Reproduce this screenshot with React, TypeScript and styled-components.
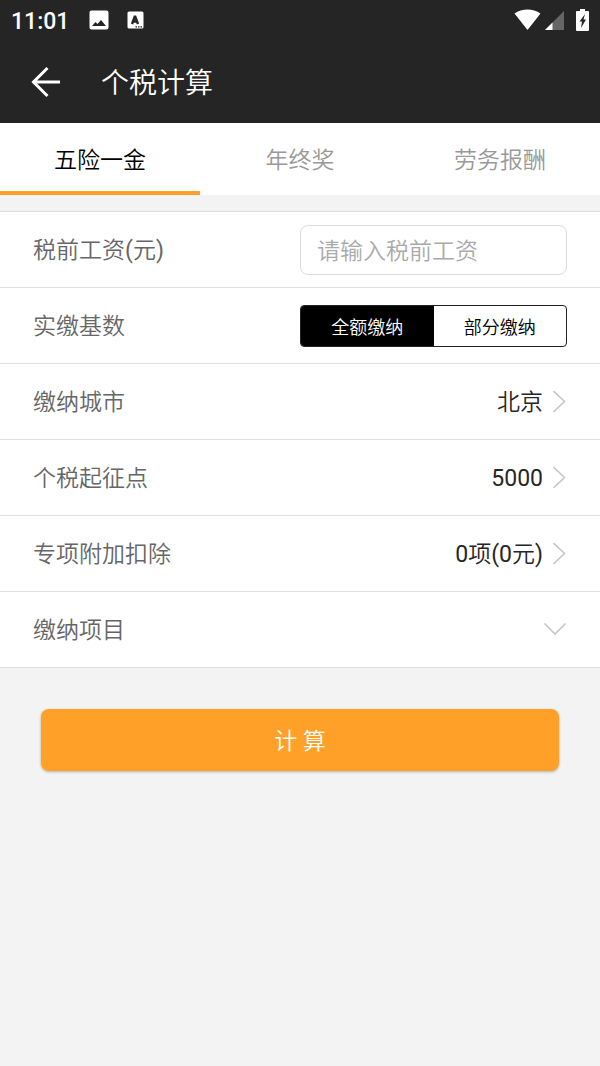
import React, { useState } from "react";
import styled, { createGlobalStyle } from "styled-components";

const GlobalStyle = createGlobalStyle`
  *, *::before, *::after { box-sizing: border-box; }
  body {
    margin: 0;
    background: #f3f3f3;
    font-family: Roboto, "Noto Sans CJK SC", sans-serif;
    font-size: 23px;
    font-weight: 350;
    line-height: 32px;
    color: #262626;
  }
  button, input { font: inherit; color: inherit; }
`;

const Screen = styled.div`
  display: flex;
  flex-direction: column;
  min-height: 100vh;
`;

const Header = styled.header`
  background: #252525;
  color: #fff;
`;

const StatusBar = styled.div`
  display: flex;
  align-items: center;
  height: 40px;
  padding: 0 5px 0 11px;
`;

const Clock = styled.span`
  padding-top: 4px;
  font-size: 23px;
  font-weight: 500;
  line-height: 36px;
  margin-right: 20px;
`;

const StatusIcons = styled.div<{ $gap: number; $end?: boolean }>`
  display: flex;
  align-items: center;
  gap: ${(p) => p.$gap}px;
  margin-left: ${(p) => (p.$end ? "auto" : "0")};
`;

const AppBar = styled.div`
  display: flex;
  align-items: center;
  gap: 37px;
  height: 83px;
  padding: 0 28px;
`;

const BackButton = styled.button`
  display: flex;
  padding: 0;
  border: 0;
  background: none;
  cursor: pointer;
`;

const Title = styled.h1`
  margin: 0;
  padding-top: 4px;
  font-size: 28px;
  font-weight: inherit;
  line-height: 40px;
`;

const Tabs = styled.nav`
  display: flex;
  background: #fff;
`;

const Tab = styled.button<{ $active: boolean }>`
  flex: 1;
  height: 72px;
  padding: 8px 0 0;
  border: 0;
  border-bottom: 4px solid ${(p) => (p.$active ? "#ffa028" : "transparent")};
  background: none;
  color: ${(p) => (p.$active ? "#000" : "#999")};
  cursor: pointer;
`;

const Form = styled.form`
  display: flex;
  flex-direction: column;
`;

const List = styled.div`
  margin-top: 16px;
  border-top: 1px solid #dcdcdc;
  background: #fff;
`;

const Row = styled.div`
  display: flex;
  align-items: center;
  justify-content: space-between;
  height: 76px;
  padding: 0 33px;
  border-bottom: 1px solid #e0e0e0;
`;

const LinkRow = styled(Row).attrs({ as: "button", type: "button" })`
  width: 100%;
  border-width: 0 0 1px;
  background: none;
  text-align: left;
  cursor: pointer;
`;

const Label = styled.span`
  padding-top: 3px;
  color: #666;
`;

const Value = styled.span`
  display: flex;
  align-items: center;
  gap: 10px;
`;

const ValueText = styled.span`
  padding-top: 3px;
`;

const Latin = styled.span`
  font-weight: 400;
`;

const SalaryInput = styled.input`
  width: 50%;
  height: 50px;
  padding: 3px 16px 0;
  border: 1px solid #dcdcdc;
  border-radius: 8px;
  outline: 0;
  background: #fff;
  &::placeholder { color: #aaa; opacity: 1; }
`;

const Segments = styled.div`
  display: flex;
  width: 50%;
  height: 42px;
  border: 1px solid #222;
  border-radius: 4px;
  overflow: hidden;
`;

const Segment = styled.label`
  position: relative;
  display: flex;
  flex: 1;
  align-items: center;
  justify-content: center;
  padding-top: 4px;
  font-size: 18px;
  color: #000;
  cursor: pointer;
  &:has(input:checked) { background: #000; color: #fff; }
`;

const HiddenRadio = styled.input`
  position: absolute;
  opacity: 0;
  margin: 0;
`;

const SubmitButton = styled.button`
  height: 62px;
  margin: 41px 41px;
  padding: 3px 0 0;
  border: 0;
  border-radius: 8px;
  background: #ffa028;
  box-shadow: 0 1px 3px rgba(0, 0, 0, 0.28);
  color: #fff;
  cursor: pointer;
`;

const ChevronRight = () => (
  <svg width="14" height="24" viewBox="0 0 14 24" fill="none" stroke="#c8c8c8" strokeWidth="1.6" aria-hidden="true">
    <path d="M0.5 1 11.5 11.5 0.5 22" />
  </svg>
);

const ChevronDown = () => (
  <svg width="24" height="14" viewBox="0 0 24 14" fill="none" stroke="#c8c8c8" strokeWidth="1.6" aria-hidden="true">
    <path d="M1.5 0.5 12 11 22.5 0.5" />
  </svg>
);

// Digits and brackets are set one weight up so they balance the Chinese text.
const Mixed = ({ text }: { text: string }) => (
  <>
    {text.split(/([0-9()]+)/).map((part, i) => (i % 2 ? <Latin key={i}>{part}</Latin> : part))}
  </>
);

const tabs = ["五险一金", "年终奖", "劳务报酬"];
const bases = ["全额缴纳", "部分缴纳"];
const options = [
  { label: "缴纳城市", value: "北京" },
  { label: "个税起征点", value: "5000" },
  { label: "专项附加扣除", value: "0项(0元)" },
];

export default function App() {
  const [tab, setTab] = useState(0);
  const [base, setBase] = useState(0);

  return (
    <Screen>
      <GlobalStyle />
      <Header>
        <StatusBar>
          <Clock>11:01</Clock>
          <StatusIcons $gap={18}>
            <svg width="20" height="20" viewBox="0 0 20 20" aria-hidden="true">
              <rect x="0.5" y="0.5" width="19" height="19" rx="2" fill="#fff" />
              <path d="M3 16 6.5 12 8.5 14 12 10 17 16Z" fill="#252525" />
            </svg>
            <svg width="17" height="18" viewBox="0 0 17 18" aria-hidden="true">
              <rect x="0.5" y="0.5" width="16" height="17" rx="1.5" fill="#fff" />
              <path d="M5 13 8 5 11 13M6 10.5H10" fill="none" stroke="#252525" strokeWidth="2.4" strokeLinejoin="bevel" />
              <path d="M8.5 15.8h1.5M11 15.8h1.5M13.5 15.8H15" stroke="#252525" strokeWidth="1.2" />
            </svg>
          </StatusIcons>
          <StatusIcons $gap={4} $end>
            <svg width="27" height="22" viewBox="0 0 27 22" aria-hidden="true">
              <path d="M0.5 4.5C8-1 19-1 26.5 4.5L13.5 21Z" fill="#fff" />
            </svg>
            <svg width="22" height="20" viewBox="0 0 22 20" aria-hidden="true">
              <path d="M0 20 19 1V20Z" fill="#666" />
              <path d="M0 20 7.5 12.5V20Z" fill="#fff" />
            </svg>
            <svg width="24" height="24" viewBox="0 0 24 24" aria-hidden="true">
              <path d="M9 1h5v2h3q1 0 1 1v18q0 1-1 1H6q-1 0-1-1V4q0-1 1-1h3Z" fill="#fff" />
              <path d="M14 6 8.5 13.5h2.5L10 20 15 11.5h-2.5Z" fill="#252525" />
            </svg>
          </StatusIcons>
        </StatusBar>
        <AppBar>
          <BackButton type="button" aria-label="返回">
            <svg width="36" height="36" viewBox="0 0 36 36" fill="none" stroke="#fff" strokeWidth="3" aria-hidden="true">
              <path d="M32 18H6M19.5 4 5.5 18 19.5 32" />
            </svg>
          </BackButton>
          <Title>个税计算</Title>
        </AppBar>
      </Header>
      <Tabs>
        {tabs.map((name, i) => (
          <Tab key={name} type="button" $active={i === tab} onClick={() => setTab(i)}>
            {name}
          </Tab>
        ))}
      </Tabs>
      <Form onSubmit={(e) => e.preventDefault()}>
        <List>
          <Row>
            <Label as="label" htmlFor="salary">
              <Mixed text="税前工资(元)" />
            </Label>
            <SalaryInput id="salary" inputMode="decimal" placeholder="请输入税前工资" />
          </Row>
          <Row>
            <Label id="base-label">实缴基数</Label>
            <Segments role="radiogroup" aria-labelledby="base-label">
              {bases.map((name, i) => (
                <Segment key={name}>
                  <HiddenRadio type="radio" name="base" checked={i === base} onChange={() => setBase(i)} />
                  {name}
                </Segment>
              ))}
            </Segments>
          </Row>
          {options.map((o) => (
            <LinkRow key={o.label}>
              <Label>{o.label}</Label>
              <Value>
                <ValueText>
                  <Mixed text={o.value} />
                </ValueText>
                <ChevronRight />
              </Value>
            </LinkRow>
          ))}
          <LinkRow>
            <Label>缴纳项目</Label>
            <ChevronDown />
          </LinkRow>
        </List>
        <SubmitButton type="submit">计 算</SubmitButton>
      </Form>
    </Screen>
  );
}
